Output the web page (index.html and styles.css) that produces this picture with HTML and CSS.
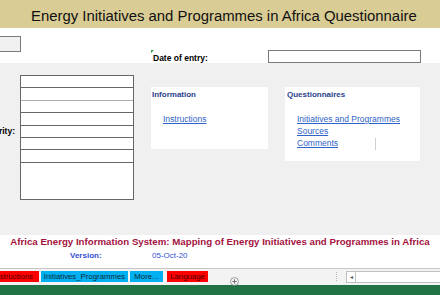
FILE: index.html
```html
<!DOCTYPE html>
<html>
<head>
    <meta charset="UTF-8" />
    <link rel="stylesheet" href="styles.css">
</head>
<body>
    <div class="title-bar">Energy Initiatives and Programmes in Africa Questionnaire</div>

    <div class="entry-row">
        <div class="cut-button"></div>
        <div class="date-label"><span class="note-mark"></span>Date of entry:</div>
        <div class="date-input"></div>
    </div>

    <div class="sheet">
        <div class="field-label"><span>Authority:</span></div>
        <div class="field-table">
            <div class="cell"></div>
            <div class="cell light"></div>
            <div class="cell"></div>
            <div class="cell"></div>
            <div class="cell"></div>
            <div class="cell"></div>
            <div class="cell"></div>
            <div class="cell big"></div>
        </div>

        <div class="panel info-panel">
            <div class="panel-title">Information</div>
            <a class="link first" href="#">Instructions</a>
        </div>

        <div class="panel quest-panel">
            <div class="panel-title">Questionnaires</div>
            <a class="link first" href="#">Initiatives and Programmes</a>
            <a class="link" href="#">Sources</a>
            <div class="link-row">
                <a class="link" href="#">Comments</a>
                <span class="cursor-line"></span>
            </div>
        </div>
    </div>

    <div class="footer-band">
        <div class="system-title">Africa Energy Information System: Mapping of Energy Initiatives and Programmes in Africa</div>
        <div class="version-row">
            <span class="version-label">Version:</span>
            <span class="version-value">05-Oct-20</span>
        </div>
    </div>

    <div class="tab-strip">
        <div class="tab red cut"><span>Instructions</span></div>
        <div class="tab blue wide">Initiatives_Programmes</div>
        <div class="tab blue">More...</div>
        <div class="tab red lang">Language</div>
        <div class="add-sheet">
            <svg width="9" height="9" viewBox="0 0 9 9">
                <circle cx="4.5" cy="4.5" r="4" fill="none" stroke="#8a8a8a" stroke-width="0.8"/>
                <path d="M4.5 2.3v4.4M2.3 4.5h4.4" stroke="#6a6a6a" stroke-width="0.9"/>
            </svg>
        </div>
        <div class="splitter"></div>
        <div class="hscroll"><span class="arrow">&#9666;</span></div>
    </div>

    <div class="status-bar"></div>
</body>
</html>
```

FILE: styles.css
```css
body {
    margin: 0;
    width: 440px;
    height: 295px;
    overflow: hidden;
    font-family: 'Liberation Sans', Arial, sans-serif;
    background-color: #ffffff;
    color: #000;
}
.title-bar {
    height: 28px;
    background-color: #d9cc95;
    padding-left: 31px;
    font-size: 14.9px;
    line-height: 33px;
    color: #111;
    white-space: nowrap;
    overflow: hidden;
}
.entry-row {
    height: 35px;
    display: flex;
    align-items: flex-start;
}
.cut-button {
    width: 20px;
    height: 14px;
    margin-top: 8px;
    background-color: #f0f0f0;
    border: 1px solid #7a7a7a;
    border-left: none;
}
.date-label {
    position: relative;
    margin-left: 131px;
    margin-top: 25px;
    font-size: 8.5px;
    font-weight: bold;
    line-height: 10px;
    padding-left: 1px;
}
.note-mark {
    position: absolute;
    left: -1px;
    top: -3px;
    width: 0;
    height: 0;
    border-top: 3px solid #2e9d3a;
    border-right: 3px solid transparent;
}
.date-input {
    width: 151px;
    height: 11px;
    margin-top: 22px;
    margin-left: 60px;
    border: 1px solid #7a7a7a;
    background-color: #fff;
}
.sheet {
    height: 172px;
    background-color: #f0f0f0;
    display: flex;
    align-items: flex-start;
}
.field-label {
    width: 15px;
    margin-top: 63px;
    margin-right: 5px;
    display: flex;
    justify-content: flex-end;
    overflow: hidden;
    white-space: nowrap;
    font-size: 8.5px;
    font-weight: bold;
}
.field-table {
    width: 112px;
    margin-top: 12px;
    border: 1px solid #666;
    background-color: #fff;
}
.cell {
    height: 11.4px;
    border-bottom: 1px solid #666;
}
.cell.light {
    border-bottom-color: #b0b0b0;
}
.cell.big {
    height: 36px;
    border-bottom: none;
}
.panel {
    background-color: #fff;
    margin-top: 24px;
    font-size: 8px;
}
.info-panel {
    width: 116px;
    height: 62px;
    margin-left: 17px;
    padding-left: 1px;
}
.quest-panel {
    width: 133px;
    height: 74px;
    margin-left: 17px;
    padding-left: 2px;
}
.panel-title {
    font-weight: bold;
    color: #2b3f8c;
    margin-top: 3px;
    line-height: 9px;
}
.link {
    display: block;
    color: #2f63c8;
    text-decoration: underline;
    line-height: 12px;
    margin-left: 10px;
    font-size: 8.5px;
}
.info-panel .link {
    margin-left: 11px;
}
.link.first {
    margin-top: 14px;
}
.link-row {
    display: flex;
}
.cursor-line {
    width: 1px;
    height: 12px;
    margin-left: 37px;
    margin-top: 1px;
    background-color: #d0d0d0;
}
.footer-band {
    height: 33px;
    text-align: center;
}
.system-title {
    padding-top: 1px;
    font-size: 9.7px;
    font-weight: bold;
    color: #a3123e;
    line-height: 12px;
    white-space: nowrap;
}
.version-row {
    display: flex;
    font-size: 8px;
    line-height: 10px;
    margin-top: 3px;
    color: #3550d6;
}
.version-label {
    font-weight: bold;
    margin-left: 70px;
    width: 82px;
    text-align: left;
}
.tab-strip {
    height: 14px;
    border-top: 1px solid #c8c8c8;
    background-color: #f3f3f3;
    display: flex;
    align-items: flex-start;
    padding-top: 2px;
}
.tab {
    height: 11px;
    font-size: 7.8px;
    line-height: 11px;
    text-align: center;
    white-space: nowrap;
    margin-right: 2px;
}
.tab.red {
    background-color: #ff0000;
    color: #4a0000;
}
.tab.blue {
    background-color: #00b0f0;
    color: #0d2a3a;
    width: 33px;
}
.tab.cut {
    width: 39px;
    display: flex;
    justify-content: flex-end;
    overflow: hidden;
}
.tab.cut span {
    padding-right: 6px;
}
.tab.wide {
    width: 87px;
}
.tab.lang {
    width: 41px;
    margin-left: 2px;
}
.add-sheet {
    margin-left: 20px;
    margin-top: 1px;
    height: 9px;
}
.splitter {
    width: 1px;
    height: 9px;
    margin-left: 97px;
    margin-top: 1px;
    border-left: 1px dotted #b8b8b8;
}
.hscroll {
    flex: 1;
    height: 10px;
    margin-left: 8px;
    border: 1px solid #c0c0c0;
    border-right: none;
    background-color: #fff;
    font-size: 6px;
    line-height: 10px;
    color: #555;
}
.arrow {
    display: inline-block;
    width: 8px;
    text-align: center;
    border-right: 1px solid #c8c8c8;
}
.status-bar {
    height: 12px;
    background-color: #217346;
}
```
